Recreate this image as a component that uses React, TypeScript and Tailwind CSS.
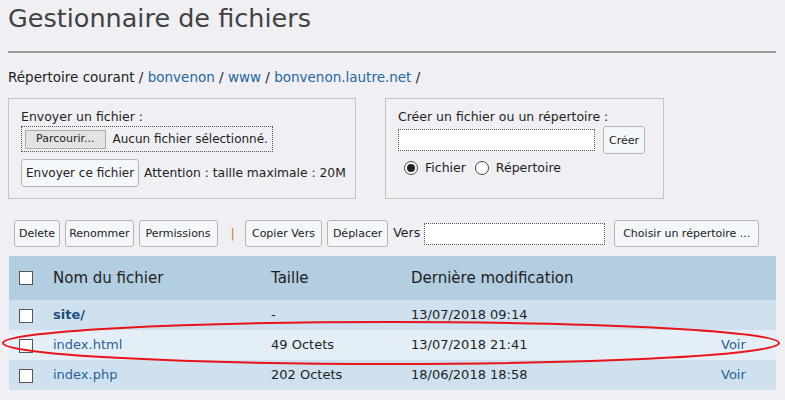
import React from 'react';

const btn =
  "h-[27px] rounded-[3px] border border-[#b4b4b4] bg-[#f4f7fa] text-[11px] text-[#222] leading-none whitespace-nowrap";

const Box = ({ checked }: { checked?: boolean }) => (
  <span className="inline-block w-[14px] h-[14px] border border-[#555] bg-white align-middle">
    {checked && <span className="block w-full h-full bg-[#333]" />}
  </span>
);

const Radio = ({ checked }: { checked?: boolean }) => (
  <span className="inline-flex items-center justify-center w-[14px] h-[14px] rounded-full border border-[#444] bg-white">
    {checked && <span className="block w-[8px] h-[8px] rounded-full bg-[#222]" />}
  </span>
);

const rows = [
  { name: 'site/', size: '-', date: '13/07/2018 09:14', dir: true, bg: 'bg-[#cfe1ef]' },
  { name: 'index.html', size: '49 Octets', date: '13/07/2018 21:41', bg: 'bg-[#e4eef7]' },
  { name: 'index.php', size: '202 Octets', date: '18/06/2018 18:58', bg: 'bg-[#cfe1ef]' },
];

export default function App() {
  return (
    <div className="relative min-h-[400px] bg-[#efeff4] px-[8px] pt-[3px] font-['DejaVu_Sans',sans-serif] text-[13px] text-[#1e1e1e] whitespace-nowrap">
      <h1 className="text-[25.5px] leading-[30px] text-[#424242]">Gestionnaire de fichiers</h1>
      <hr className="mt-[18px] mr-[1px] border-0 h-[2px] bg-[#9a9a9a]" />
      <p className="mt-[15px] leading-[18px] text-[13.5px]">
        Répertoire courant / <a className="text-[#26679c]">bonvenon</a> /{' '}
        <a className="text-[#26679c]">www</a> / <a className="text-[#26679c]">bonvenon.lautre.net</a> /
      </p>

      <div className="mt-[12px] flex gap-[29px] text-[12.5px]">
        <div className="w-[348px] h-[101px] border border-[#c4c4c4] px-[12px] pt-[9px]">
          <div className="leading-[17px]">Envoyer un fichier :</div>
          <div className="mt-[1px] flex items-center w-[252px] h-[26px] border border-dotted border-[#555] px-[3px]">
            <span className="h-[19px] px-[10px] flex items-center bg-[#e3e3e3] border border-[#adadad] text-[11px]">
              Parcourir...
            </span>
            <span className="ml-[7px] text-[12px]">Aucun fichier sélectionné.</span>
          </div>
          <div className="mt-[7px] flex items-center gap-[5px]">
            <button className={`${btn} h-[28px] px-[4px] text-[12px]`}>Envoyer ce fichier</button>
            <span className="text-[12.3px]">Attention : taille maximale : 20M</span>
          </div>
        </div>

        <div className="w-[279px] h-[101px] border border-[#c4c4c4] px-[12px] pt-[9px]">
          <div className="leading-[17px]">Créer un fichier ou un répertoire :</div>
          <div className="flex items-start gap-[8px]">
            <div className="mt-[4px] w-[197px] h-[22px] border border-dotted border-[#555] bg-white" />
            <button className={`${btn} h-[28px] mt-[1px] px-[5px]`}>Créer</button>
          </div>
          <div className="mt-[5px] ml-[6px] flex items-center gap-[7px]">
            <Radio checked />
            <span className="mr-[2px]">Fichier</span>
            <Radio />
            <span>Répertoire</span>
          </div>
        </div>
      </div>

      <div className="mt-[21px] ml-[6px] flex items-center">
        <button className={`${btn} px-[4px]`}>Delete</button>
        <button className={`${btn} ml-[5px] px-[3px]`}>Renommer</button>
        <button className={`${btn} ml-[5px] px-[6px]`}>Permissions</button>
        <span className="ml-[13px] mr-[10px] text-[#d07a26]">|</span>
        <button className={`${btn} px-[6px]`}>Copier Vers</button>
        <button className={`${btn} ml-[5px] px-[5px]`}>Déplacer</button>
        <span className="ml-[5px] text-[12.5px]">Vers</span>
        <div className="ml-[4px] w-[181px] h-[22px] border border-dotted border-[#555] bg-white" />
        <button className={`${btn} ml-[9px] px-[8px]`}>Choisir un répertoire ...</button>
      </div>

      <table className="mt-[9px] ml-[1px] w-[767px] border-collapse">
        <thead>
          <tr className="h-[44px] bg-[#b3cde1] text-[15px] text-left">
            <th className="w-[44px] pl-[10px] font-normal"><Box /></th>
            <th className="w-[218px] font-normal">Nom du fichier</th>
            <th className="w-[140px] font-normal">Taille</th>
            <th className="font-normal">Dernière modification</th>
            <th className="w-[55px]" />
          </tr>
        </thead>
        <tbody>
          {rows.map((r) => (
            <tr key={r.name} className={`h-[30px] ${r.bg}`}>
              <td className="pl-[10px]"><Box /></td>
              <td>
                <a className={r.dir ? 'font-bold text-[#1b4f7c]' : 'text-[#2a6194]'}>{r.name}</a>
              </td>
              <td>{r.size}</td>
              <td>{r.date}</td>
              <td className="text-[#2a6194]">{r.dir ? '' : 'Voir'}</td>
            </tr>
          ))}
        </tbody>
      </table>

      <svg className="absolute left-0 top-[319px] pointer-events-none" width="785" height="52">
        <ellipse cx="391" cy="24" rx="388" ry="21" fill="none" stroke="#e8141a" strokeWidth="2" />
      </svg>
    </div>
  );
}
